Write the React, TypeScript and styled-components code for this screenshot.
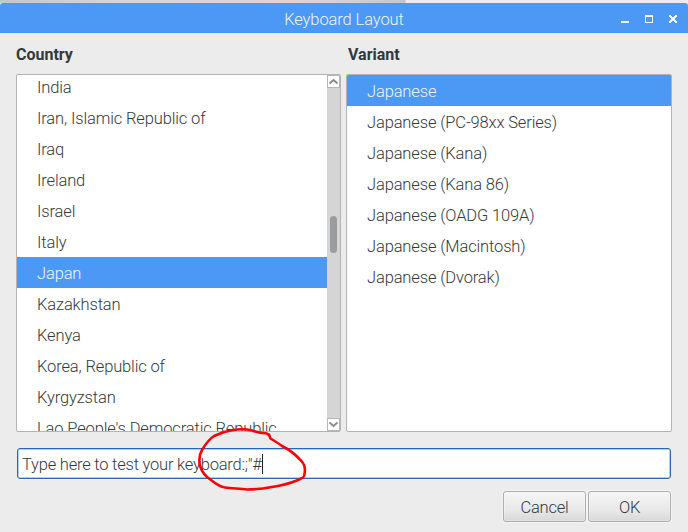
import React from "react";
import styled, { createGlobalStyle } from "styled-components";

const GlobalStyle = createGlobalStyle`
  * { box-sizing: border-box; }
  body { margin: 0; overflow: hidden; background: #ececec; }
`;

const Screen = styled.div`
  position: relative;
  width: 688px;
  height: 532px;
  overflow: hidden;
  background: #ececec;
  color: #33393b;
  font: 300 16.5px/31px Roboto, sans-serif;
  letter-spacing: -0.14px;
`;

const Backdrop = styled.div`
  height: 3px;
  background: linear-gradient(90deg, #bfc8ce 0, #d3d5d8 110px, #dcd5d5 230px, #e6d3c9 290px, #d3d2d6 340px, #c0c8d1 405px, #ececec 406px);
`;

const TitleBar = styled.header`
  display: grid;
  grid-template-columns: 72px 1fr 72px;
  height: 30px;
  background: #4c98f5;
  border-radius: 3px 3px 0 0;
  color: #f0f5fc;
  text-align: center;
`;

const Title = styled.h1`
  margin: 0;
  font: inherit;
  line-height: 33px;
  letter-spacing: -0.1px;
`;

const WindowControls = styled.div`
  display: flex;
  gap: 16px;
  padding: 12px 0 0 5px;
  svg { display: block; }
`;

const Content = styled.main`
  padding: 0 16px;
`;

const Columns = styled.div`
  display: grid;
  grid-template-columns: 325px 326px;
  column-gap: 5px;
`;

const Heading = styled.h2<{ $indent?: number }>`
  margin: 0;
  height: 41px;
  padding-left: ${(p) => p.$indent ?? 0}px;
  font-size: 16px;
  font-weight: 700;
  line-height: 43px;
  letter-spacing: 0;
`;

const ListFrame = styled.div`
  display: flex;
  height: 358px;
  border: 1px solid #b2b3b2;
  border-radius: 2px;
  background: #fff;
  overflow: hidden;
`;

const Options = styled.ul<{ $scroll?: number }>`
  flex: 1;
  min-width: 0;
  margin: ${(p) => -(p.$scroll ?? 0)}px 0 0;
  padding: 0;
  list-style: none;
`;

const Option = styled.li<{ $selected?: boolean }>`
  height: 31px;
  padding: 1px 0 0 20px;
  white-space: nowrap;
  background: ${(p) => (p.$selected ? "#4c98f5" : "transparent")};
  color: ${(p) => (p.$selected ? "#f0f5fc" : "inherit")};
`;

const ScrollBar = styled.div`
  display: flex;
  flex-direction: column;
  width: 13px;
  background: #d5d5d5;
`;

const ScrollButton = styled.div`
  width: 13px;
  height: 13px;
  border: 1px solid #b5b6b5;
  background: #fff;
  svg { display: block; }
`;

const Track = styled.div`
  flex: 1;
  padding: 128px 3px 0;
`;

const Thumb = styled.div`
  width: 7px;
  height: 37px;
  border-radius: 4px;
  background: #9b9c9d;
`;

const Entry = styled.div`
  display: flex;
  align-items: center;
  width: 654px;
  height: 31px;
  margin: 16px 0 0 1px;
  padding: 1px 0 0 4px;
  border: 1px solid #2865b2;
  border-radius: 3px;
  background: #fff;
  box-shadow: inset 0 0 0 1px #b0cff5, 0 1px 0 #f7f7f7;
  letter-spacing: -0.21px;
`;

const Caret = styled.span`
  width: 1px;
  height: 20px;
  background: #222;
`;

const Actions = styled.footer`
  display: flex;
  justify-content: flex-end;
  gap: 2px;
  padding: 12px 1px 0 0;
`;

const Button = styled.button`
  width: 83px;
  height: 31px;
  padding: 2px 0 0;
  border: 1px solid #adaeae;
  border-radius: 3px;
  background: linear-gradient(#f5f5f5, #e9e9e9 60%, #d8d8d8);
  box-shadow: inset 0 0 0 1px rgba(255, 255, 255, 0.25), 0 0 0 1px #f4f4f4;
  color: inherit;
  font: inherit;
  line-height: 28px;
  letter-spacing: -0.25px;
`;

const Annotation = styled.svg`
  position: absolute;
  left: 0;
  top: 0;
  pointer-events: none;
`;

const countries = [
  "India", "Iran, Islamic Republic of", "Iraq", "Ireland", "Israel", "Italy", "Japan",
  "Kazakhstan", "Kenya", "Korea, Republic of", "Kyrgyzstan", "Lao People's Democratic Republic",
];

const variants = [
  "Japanese", "Japanese (PC-98xx Series)", "Japanese (Kana)", "Japanese (Kana 86)",
  "Japanese (OADG 109A)", "Japanese (Macintosh)", "Japanese (Dvorak)",
];

const Chevron = ({ down }: { down?: boolean }) => (
  <svg width="11" height="11" viewBox="0 0 11 11" fill="none" stroke="#8b8c87" strokeWidth="2">
    <path d={down ? "M1.5 3.5 5.5 7 9.5 3.5" : "M1.5 7.5 5.5 4 9.5 7.5"} />
  </svg>
);

export default function App() {
  return (
    <Screen>
      <GlobalStyle />
      <Backdrop />
      <TitleBar>
        <span />
        <Title>Keyboard Layout</Title>
        <WindowControls>
          <svg width="8" height="8" fill="#f4f6f8"><path d="M0 6h8v2H0z" /></svg>
          <svg width="8" height="8" fill="#f4f6f8" fillRule="evenodd">
            <path d="M0 0h8v8H0zM1 2v5h6V2z" />
          </svg>
          <svg width="8" height="8" fill="#f4f6f8" shapeRendering="crispEdges">
            <path d="M0 0h2v1h1v1h2V1h1V0h2v2H7v1H6v2h1v1h1v2H6V7H5V6H3v1H2v1H0V6h1V5h1V3H1V2H0z" />
          </svg>
        </WindowControls>
      </TitleBar>
      <Content>
        <Columns>
          <section>
            <Heading>Country</Heading>
            <ListFrame>
              <Options $scroll={4}>
                {countries.map((name) => (
                  <Option key={name} $selected={name === "Japan"}>{name}</Option>
                ))}
              </Options>
              <ScrollBar>
                <ScrollButton><Chevron /></ScrollButton>
                <Track><Thumb /></Track>
                <ScrollButton><Chevron down /></ScrollButton>
              </ScrollBar>
            </ListFrame>
          </section>
          <section>
            <Heading $indent={2}>Variant</Heading>
            <ListFrame>
              <Options>
                {variants.map((name) => (
                  <Option key={name} $selected={name === "Japanese"}>{name}</Option>
                ))}
              </Options>
            </ListFrame>
          </section>
        </Columns>
        <Entry>
          <span>Type here to test your keyboard:;"#</span>
          <Caret />
        </Entry>
        <Actions>
          <Button>Cancel</Button>
          <Button>OK</Button>
        </Actions>
      </Content>
      <Annotation width="688" height="532" fill="none" stroke="#fb0007" strokeWidth="2.6" strokeLinecap="round" strokeLinejoin="round">
        <path d="M269 435.500C269 434 267.500 434.500 267 433.500C261 433 256 432 252 430.500C246 429 239 429 233 430C226 431 220 433 214 436C209 439 205 445 202 450C199.500 454 199 461 200 466C202 472 206 477 211 480C216 484 220 487 225 487.500C232 488.500 240 488.500 247 489.500C256 489.500 264 488.500 272 487C282 485.500 291 483 298 480C303 478 304.500 477 304.500 474C306 465 303 463 299.500 459C294 453 288 449 282 446C278 443 273 440 270.500 438.500L269 434.500" />
      </Annotation>
    </Screen>
  );
}
